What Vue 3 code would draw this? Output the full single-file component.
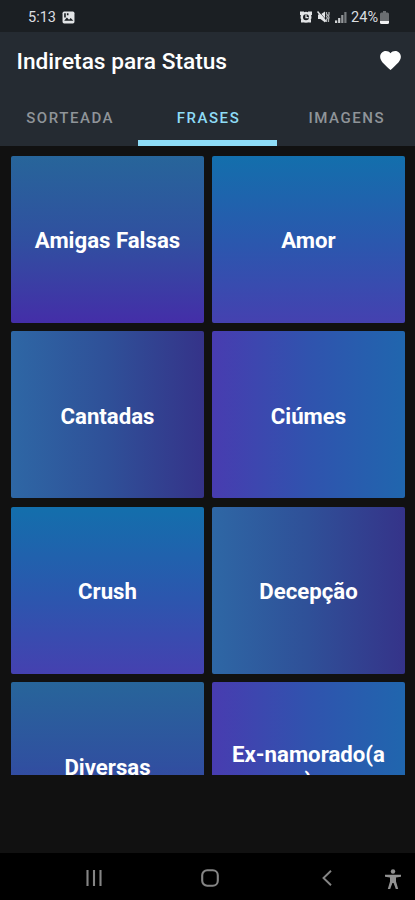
<template>
  <div class="screen">
    <!-- Barra de status -->
    <div class="status">
      <span class="status__time">5:13</span>
      <svg class="status__picture" viewBox="0 0 24 24">
        <rect x="1" y="1" width="22" height="22" rx="3" fill="#e2e4e6" />
        <path d="M4 18l5-6 4 4 3-3 5 5z" fill="#1b1f23" />
        <path d="M4 4h3v8H4zM9 4h3v4H9z" fill="#1b1f23" />
      </svg>
      <span class="status__spacer"></span>
      <svg class="status__alarm" viewBox="0 0 24 24">
        <path d="M0 1h8v3L4 8H0zM24 1h-8v3l4 4h4zM2 18h5v5H2zM22 18h-5v5h5z" fill="#e2e4e6" />
        <circle cx="12" cy="12.5" r="8.5" fill="#1b1f23" stroke="#e2e4e6" stroke-width="5" />
        <path d="M12 7v6h5" fill="none" stroke="#e2e4e6" stroke-width="2.5" />
      </svg>
      <svg class="status__mute" viewBox="0 0 24 24">
        <path d="M1 7h5l9-6v22l-9-7H1z" fill="#e2e4e6" />
        <path d="M3 1l14 17" stroke="#1b1f23" stroke-width="1.5" />
        <path d="M0 1l17 20" stroke="#e2e4e6" stroke-width="3" />
        <path d="M18 2v4l2 2-2 3 2 3-2 3v5M23 2v5l-1 3 1 3-1 4v5" fill="none" stroke="#b0b3b5" stroke-width="2.5" />
      </svg>
      <svg class="status__signal" viewBox="0 0 12 12">
        <rect x="0" y="9.4" width="2.2" height="2.6" fill="#d0d2d4" />
        <rect x="3.1" y="7" width="2.2" height="5" fill="#d0d2d4" />
        <rect x="6.2" y="4" width="2.2" height="8" fill="#94979a" />
        <rect x="9.3" y="1" width="2.2" height="11" fill="#777b7e" />
      </svg>
      <span class="status__battery">24%</span>
      <svg class="status__cell" viewBox="0 0 9 13">
        <path d="M0 3q0-1.5 1.5-1.5H3V0h3v1.5h1.5Q9 1.5 9 3v7H0z" fill="#6b6e71" />
        <path d="M0 10h9v1.5q0 1.5-1.5 1.5h-6Q0 13 0 11.5z" fill="#f0f1f2" />
      </svg>
    </div>

    <header class="header">
      <div class="toolbar">
        <h1 class="toolbar__title">Indiretas para Status</h1>
        <button class="toolbar__fav" aria-label="Favoritos">
          <svg viewBox="2 3 20 18.35">
            <path
              fill="#fff"
              d="M12 21.35l-1.45-1.32C5.4 15.36 2 12.28 2 8.5 2 5.42 4.42 3 7.5 3c1.74 0 3.41.81 4.5 2.09C13.09 3.81 14.76 3 16.5 3 19.58 3 22 5.42 22 8.5c0 3.78-3.4 6.86-8.55 11.54L12 21.35z"
            />
          </svg>
        </button>
      </div>
      <nav class="tabs">
        <button
          v-for="tab in tabs"
          :key="tab"
          class="tab"
          :class="{ 'tab--active': tab === activeTab }"
          @click="activeTab = tab"
        >
          {{ tab }}
        </button>
      </nav>
    </header>

    <main class="list">
      <div
        v-for="category in categories"
        :key="category.name"
        class="card"
        :class="`card--${category.tone}`"
      >
        <span class="card__name">{{ category.name }}</span>
      </div>
    </main>

    <div class="banner"></div>

    <!-- Navegação do sistema -->
    <footer class="navbar">
      <svg class="navbar__recents" viewBox="0 0 16 16">
        <path d="M1.5 0v16M8 0v16M14.5 0v16" stroke="#858585" stroke-width="2.1" />
      </svg>
      <svg class="navbar__home" viewBox="0 0 18 18">
        <rect x="1.2" y="1.2" width="15.6" height="15.6" rx="5" fill="none" stroke="#858585" stroke-width="2.1" />
      </svg>
      <svg class="navbar__back" viewBox="0 0 10 16">
        <path d="M9 .8L1.5 8 9 15.2" fill="none" stroke="#858585" stroke-width="1.9" />
      </svg>
      <svg class="navbar__access" viewBox="0 0 16 20">
        <circle cx="8" cy="2.5" r="2.2" fill="#929292" />
        <path d="M0 5.8h16v2l-5 .8v4l2.2 7.4h-2.4L8.6 14H7.4l-2.2 6H2.8L5 12.6v-4l-5-.8z" fill="#929292" />
      </svg>
    </footer>
  </div>
</template>

<script setup>
import { ref } from 'vue'

const tabs = ['SORTEADA', 'FRASES', 'IMAGENS']
const activeTab = ref('FRASES')

const categories = [
  { name: 'Amigas Falsas', tone: 'dusk' },
  { name: 'Amor', tone: 'ocean' },
  { name: 'Cantadas', tone: 'night' },
  { name: 'Ciúmes', tone: 'violet' },
  { name: 'Crush', tone: 'ocean' },
  { name: 'Decepção', tone: 'night' },
  { name: 'Diversas', tone: 'dusk' },
  { name: 'Ex-namorado(a)', tone: 'violet' }
]
</script>

<style>
body {
  background: #111;
}
</style>

<style scoped>
.screen {
  display: flex;
  flex-direction: column;
  width: 415px;
  height: 900px;
  overflow: hidden;
  background: #111;
  color: #fff;
  font-family: Roboto, sans-serif;
}

button {
  padding: 0;
  border: none;
  background: transparent;
  font-family: inherit;
  cursor: pointer;
}

svg {
  display: block;
  flex-shrink: 0;
}

/* ── Barra de status ── */
.status {
  display: flex;
  align-items: center;
  height: 32px;
  padding: 2px 26px 0 28px;
  box-sizing: border-box;
  background: #1b1f23;
  color: #dcdee0;
  font-size: 14.5px;
}

.status__picture {
  width: 13px;
  height: 13px;
  margin-left: 6px;
}

.status__spacer {
  flex: 1;
}

.status__alarm {
  width: 12px;
  height: 12px;
}

.status__mute {
  width: 13px;
  height: 12px;
  margin-left: 5px;
}

.status__signal {
  width: 12px;
  height: 12px;
  margin-left: 5px;
}

.status__battery {
  margin-left: 4px;
}

.status__cell {
  width: 9px;
  height: 13px;
  margin-left: 2px;
}

/* ── Cabeçalho ── */
.header {
  height: 114px;
  background: #252b32;
}

.toolbar {
  display: flex;
  align-items: center;
  justify-content: space-between;
  height: 58px;
  padding: 0 14px 0 16.5px;
}

.toolbar__title {
  margin: 0;
  font-size: 22.7px;
  font-weight: 500;
  white-space: nowrap;
}

.toolbar__fav svg {
  width: 21px;
  height: 19px;
  margin-top: -2px;
}

.tabs {
  display: grid;
  grid-template-columns: repeat(3, 1fr);
  height: 56px;
}

.tab {
  padding: 6px 0 0 2px;
  border-bottom: 6px solid transparent;
  color: #8f9499;
  font-size: 15px;
  font-weight: 500;
  letter-spacing: 1.55px;
}

.tab--active {
  border-bottom-color: #8edcf6;
  color: #8edcf6;
}

/* ── Categorias ── */
.list {
  display: grid;
  grid-template-columns: 1fr 1fr;
  grid-auto-rows: 167px;
  gap: 8.5px 8px;
  height: 629px;
  padding: 9.5px 10px 0 11px;
  box-sizing: border-box;
  overflow: hidden;
}

.card {
  display: flex;
  align-items: center;
  justify-content: center;
  padding: 2px 17px 0;
  border-radius: 2px;
}

.card__name {
  min-width: 0;
  font-size: 22.2px;
  font-weight: 700;
  line-height: 26px;
  text-align: center;
}

.card--violet .card__name {
  line-break: anywhere;
}

.card--dusk {
  background: linear-gradient(180deg, #27659a, #3050a0 50%, #442ea8);
}

.card--ocean {
  background: linear-gradient(180deg, #136fac, #2c56ae 55%, #4541b0);
}

.card--night {
  background: linear-gradient(90deg, #2e67a5, #2f5098 50%, #353389);
}

.card--violet {
  background: linear-gradient(90deg, #483cb0, #3053ae 50%, #2066ae);
}

.banner {
  flex: 1;
}

/* ── Navegação do sistema ── */
.navbar {
  display: flex;
  align-items: center;
  height: 47px;
  padding: 3px 14px 0 86px;
  box-sizing: border-box;
  background: #000;
}

.navbar__recents {
  width: 16px;
  height: 16px;
}

.navbar__home {
  width: 18px;
  height: 18px;
  margin-left: 99px;
}

.navbar__back {
  width: 10px;
  height: 16px;
  margin-left: 103px;
}

.navbar__access {
  width: 16px;
  height: 20px;
  margin: 2px 0 0 53px;
}
</style>
